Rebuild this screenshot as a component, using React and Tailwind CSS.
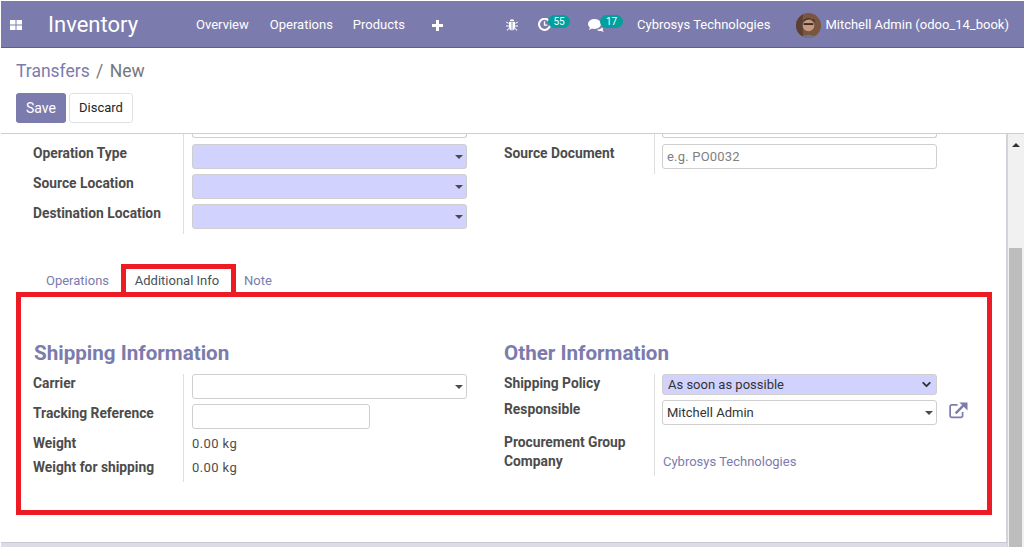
import React from "react";
import { ChevronDown } from "lucide-react";

const labelCls = "text-[13.8px] leading-[18px] font-bold text-[#4c4c4c] whitespace-nowrap";
const caret = "w-0 h-0 border-x-[4px] border-x-transparent border-t-[4px] border-t-[#4c4c4c]";

function ComboBox({ value, highlight, className = "w-[275px]" }) {
  return (
    <div
      className={`${className} h-[25px] rounded-[3px] border border-[#cfcfcf] flex items-center justify-between pl-[4px] pr-[3px] text-[13px] text-[#333] ${
        highlight ? "bg-[#d2d2ff]" : "bg-white"
      }`}
    >
      <span>{value}</span>
      <span className={caret} />
    </div>
  );
}

function Row({ label, height = "h-[30px]", pad = "pl-[8px]", children }) {
  return (
    <div className={`flex ${height}`}>
      <div className={`w-[150px] shrink-0 ${labelCls}`}>{label}</div>
      <div className={`border-l border-[#dedede] ${pad} flex-1`}>{children}</div>
    </div>
  );
}

function NavBar() {
  return (
    <div className="h-[47px] shrink-0 mt-px ml-px pt-[2px] bg-[#7c7bad] border-b border-[#5f5e8f] flex items-center text-white text-[13px] whitespace-nowrap">
      <svg viewBox="0 0 12 10" className="w-[12px] h-[10px] ml-[9px]" fill="#fff">
        <rect width="5.5" height="4.5" />
        <rect x="6.5" width="5.5" height="4.5" />
        <rect y="5.5" width="5.5" height="4.5" />
        <rect x="6.5" y="5.5" width="5.5" height="4.5" />
      </svg>
      <span className="ml-[26px] text-[22px] leading-none">Inventory</span>
      <span className="ml-[58px]">Overview</span>
      <span className="ml-[21px]">Operations</span>
      <span className="ml-[20px]">Products</span>
      <svg viewBox="0 0 11 11" className="ml-[27px] w-[11px] h-[11px]" fill="#fff">
        <path d="M4 0h3v4h4v3H7v4H4V7H0V4h4z" />
      </svg>
      <svg viewBox="0 0 12 12" className="ml-[63px] w-[12px] h-[12px]" fill="#fff">
        <path d="M3.6 2.2a2.4 2 0 0 1 4.8 0z" />
        <path d="M3 3h2.6v8.5C3.8 11.2 3 9.6 3 8zM6.4 3H9v5c0 1.6-.8 3.2-2.6 3.5z" />
        <path d="M.6 2.6l2 1.4v1L.2 3.4zM11.4 2.6l-2 1.4v1l2.4-1.6zM0 6.4h3v1H0zM9 6.4h3v1H9zM.6 11l2.2-2 .4.8-2 1.9zM11.4 11l-2.2-2-.4.8 2 1.9z" />
      </svg>
      <div className="ml-[20px] flex items-center">
        <svg viewBox="0 0 14 14" className="w-[13px] h-[13px] mt-[-2px]" fill="none" stroke="#fff">
          <path d="M11.6 2.8A6 6 0 1 0 13 8" strokeWidth="2.2" />
          <path d="M7 3.5V7.6H10" strokeWidth="1.4" />
        </svg>
        <span className="ml-[-3px] mt-[-7px] h-[13px] w-[22px] rounded-full bg-[#00a09d] text-[10px] leading-[13px] text-center">55</span>
      </div>
      <div className="ml-[18px] flex items-center">
        <svg viewBox="0 0 17 13" className="w-[17px] h-[13px] mt-[1px]" fill="#fff">
          <ellipse cx="6.5" cy="5" rx="6.5" ry="5" />
          <path d="M2 8l-1 3 4-2z" />
          <path d="M9 10.4c2 .2 4-.6 5-2 1.4 1 1.2 2.4.6 3l1.4 1.6-3.2-1c-1.4.3-3 0-3.8-1.6z" />
        </svg>
        <span className="ml-[-5px] mt-[-7px] h-[13px] w-[23px] rounded-full bg-[#00a09d] text-[10px] leading-[13px] text-center">17</span>
      </div>
      <span className="ml-[14px]">Cybrosys Technologies</span>
      <svg viewBox="0 0 26 26" className="ml-[26px] w-[25px] h-[25px] rounded-full">
        <rect width="26" height="26" fill="#7a5540" />
        <rect x="0" y="0" width="7" height="26" fill="#5a4034" />
        <circle cx="13" cy="13" r="6" fill="#c79a80" />
        <path d="M6 10 Q13 1 20 10 L19 7 Q13 4 7 9 Z" fill="#2d221d" />
        <path d="M4 26 Q13 19 22 26 Z" fill="#6f7488" />
        <rect x="8" y="10.5" width="10" height="2" fill="#3b3029" />
      </svg>
      <span className="ml-[4px]">Mitchell Admin (odoo_14_book)</span>
    </div>
  );
}

function ControlPanel() {
  return (
    <div className="h-[86px] shrink-0 border-b border-[#cfcfcf] ml-px pl-[15px] bg-white">
      <div className="pt-[11px] text-[17.5px] leading-[24px] text-[#7c7bad]">
        Transfers <span className="text-[#777] ml-[2px]">/</span> <span className="text-[#777] ml-[2px]">New</span>
      </div>
      <div className="mt-[10px] flex gap-[3px]">
        <button className="h-[30px] w-[50px] rounded-[3px] bg-[#7c7bad] text-white text-[14px]">Save</button>
        <button className="h-[30px] w-[64px] rounded-[3px] bg-white border border-[#dee2e6] text-[#212529] text-[13px]">Discard</button>
      </div>
    </div>
  );
}

function ExternalIcon() {
  return (
    <svg viewBox="0 0 20 18" className="ml-[12px] mt-[1px] w-[19px] h-[18px]" fill="none" stroke="#7c7bad">
      <path d="M9 3.5 H3 A1.8 1.8 0 0 0 1.2 5.3 V15 A1.8 1.8 0 0 0 3 16.8 H12.5 A1.8 1.8 0 0 0 14.3 15 V11" strokeWidth="1.8" />
      <path d="M7 12.5 L15 4.5" strokeWidth="2.6" />
      <path d="M11 1 H19.5 V9.5 Z" fill="#7c7bad" stroke="none" />
    </svg>
  );
}

export default function App() {
  return (
    <div className="relative w-[1024px] h-[547px] overflow-hidden bg-white flex flex-col font-[Roboto,sans-serif]">
      <NavBar />
      <ControlPanel />

      <div className="flex flex-1 min-h-0">
        <div className="flex-1 min-w-0 border-r-2 border-[#d3d3db] overflow-hidden">
          <div className="flex pl-[33px]">
            <div className="w-[471px]">
              <div className="flex h-[10px]">
                <div className="w-[150px]" />
                <div className="border-l border-[#dedede] pl-[8px]">
                  <div className="w-[275px] h-[4px] border border-t-0 border-[#cfcfcf] rounded-b-[3px]" />
                </div>
              </div>
              <Row label="Operation Type">
                <ComboBox highlight />
              </Row>
              <Row label="Source Location">
                <ComboBox highlight />
              </Row>
              <Row label="Destination Location">
                <ComboBox highlight />
              </Row>
            </div>
            <div>
              <div className="flex h-[10px]">
                <div className="w-[150px]" />
                <div className="border-l border-[#dedede] pl-[7px]">
                  <div className="w-[275px] h-[4px] border border-t-0 border-[#cfcfcf] rounded-b-[3px]" />
                </div>
              </div>
              <Row label="Source Document" pad="pl-[7px]">
                <div className="w-[275px] h-[25px] rounded-[3px] border border-[#cfcfcf] flex items-center pl-[4px] text-[13px] tracking-[0.2px] text-[#808080]">
                  e.g. PO0032
                </div>
              </Row>
            </div>
          </div>

          <div className="mt-[32px] flex pl-[33px] h-[30px] text-[13px] items-center">
            <span className="text-[#7c7bad] w-[89px] text-center">Operations</span>
            <span className="text-[#495057] w-[110px] text-center">Additional Info</span>
            <span className="text-[#7c7bad] ml-[12px]">Note</span>
          </div>

          <div className="pt-[44px] pl-[34px] flex">
            <div className="w-[470px]">
              <h2 className="text-[20.6px] leading-[26px] font-bold text-[#7c7bad]">Shipping Information</h2>
              <div className="mt-[8px] -ml-[1px]">
                <Row label="Carrier">
                  <ComboBox />
                </Row>
                <Row label="Tracking Reference">
                  <div className="w-[178px] h-[25px] rounded-[3px] border border-[#cfcfcf]" />
                </Row>
                <Row label="Weight" height="h-[24px]">
                  <span className="block text-[13px] leading-[20px] text-[#4c4c4c] tracking-[0.4px]">0.00 kg</span>
                </Row>
                <Row label="Weight for shipping" height="h-[24px]">
                  <span className="block text-[13px] leading-[20px] text-[#4c4c4c] tracking-[0.4px]">0.00 kg</span>
                </Row>
              </div>
            </div>
            <div>
              <h2 className="text-[20.6px] leading-[26px] font-bold text-[#7c7bad]">Other Information</h2>
              <div className="mt-[8px]">
                <Row label="Shipping Policy" height="h-[26px]" pad="pl-[7px]">
                  <div className="w-[275px] h-[21px] rounded-[3px] border border-[#cfcfcf] bg-[#d2d2ff] flex items-center justify-between pl-[5px] pr-[3px] text-[13px] text-[#333]">
                    <span>As soon as possible</span>
                    <ChevronDown className="w-[13px] h-[13px]" strokeWidth={3.5} />
                  </div>
                </Row>
                <Row label="Responsible" height="h-[33px]" pad="pl-[7px]">
                  <div className="flex">
                    <ComboBox value="Mitchell Admin" />
                    <ExternalIcon />
                  </div>
                </Row>
                <Row label="Procurement Group" height="h-[19px]">
                  <span />
                </Row>
                <Row label="Company" height="h-[24px]">
                  <span className="block text-[13px] leading-[19px] text-[#7c7bad]">Cybrosys Technologies</span>
                </Row>
              </div>
            </div>
          </div>
        </div>

        <div className="w-[16px] shrink-0 pr-px bg-[#f1f1f1] flex flex-col items-center">
          <span className="mt-[9px] w-0 h-0 border-x-[4px] border-x-transparent border-b-[4px] border-b-[#333]" />
          <div className="mt-[101px] w-[13px] flex-1 bg-[#bdbdbd]" />
        </div>
      </div>

      <div className="absolute left-px bottom-0 right-[17px] h-[5px] bg-[#dcdce6] border-t border-[#c8c8d4]" />

      <div className="absolute left-[16px] top-[292px] w-[976px] h-[223px] border-[5px] border-[#ed1c24]" />
      <div className="absolute left-[121px] top-[264px] w-[115px] h-[29px] border-[5px] border-b-0 border-[#ed1c24]" />
    </div>
  );
}
